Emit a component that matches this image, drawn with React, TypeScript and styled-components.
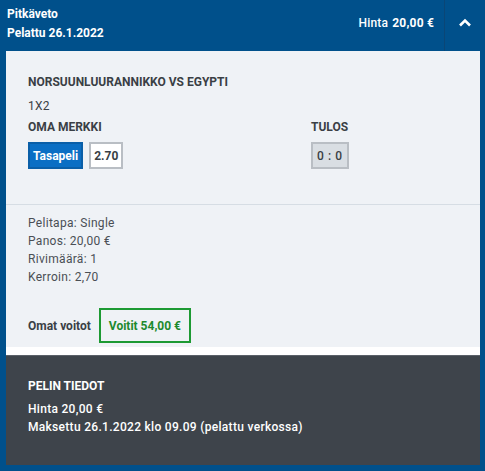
import React from "react";
import styled, { createGlobalStyle } from "styled-components";

const Global = createGlobalStyle`
  html, body { margin: 0; padding: 0; background: #ffffff; }
  body { font-family: Roboto, "Noto Sans", "DejaVu Sans", sans-serif; }
`;

const Frame = styled.div`
  width: 485px;
  height: 471px;
  box-sizing: border-box;
  background: #00508b;
  padding: 0 5px 6px 6px;
  display: flex;
  flex-direction: column;
`;

const Header = styled.div`
  height: 51px;
  display: flex;
  align-items: stretch;
  color: #ffffff;
  margin-right: -5px;
`;

const Titles = styled.div`
  flex: 1;
  padding: 5px 0 0 1px;
  display: flex;
  flex-direction: column;
  font-size: 12px;
  font-weight: 700;
  line-height: 19px;
`;

const Price = styled.div`
  display: flex;
  align-items: center;
  padding-right: 10px;
  font-size: 12px;
  font-weight: 500;
  padding-bottom: 5px;
  letter-spacing: 0.2px;
  b { font-weight: 700; margin-left: 4px; }
`;

const Toggle = styled.div`
  width: 40px;
  border-left: 1px solid #0a4676;
  display: flex;
  align-items: center;
  justify-content: center;
  padding-bottom: 6px;
`;

const Body = styled.div`
  flex: 1;
  background: #ffffff;
  display: flex;
  flex-direction: column;
`;

const Panel = styled.div`
  background: #eff2f6;
  margin-bottom: 8px;
  color: #3a3f45;
  font-size: 12px;
  line-height: 18px;
`;

const Section = styled.div<{ $top: number; $bottom: number; $divider?: boolean }>`
  padding: ${(p) => p.$top}px 22px ${(p) => p.$bottom}px 22px;
  border-bottom: ${(p) => (p.$divider ? "1px solid #d6dde4" : "none")};
`;

const Match = styled.div`
  font-weight: 700;
`;

const Market = styled.div`
  margin-top: 6px;
  letter-spacing: 0.3px;
`;

const Columns = styled.div`
  display: flex;
  margin-top: 3px;
`;

const Column = styled.div<{ $width?: number }>`
  width: ${(p) => (p.$width ? `${p.$width}px` : "auto")};
  display: flex;
  flex-direction: column;
`;

const Label = styled.div`
  font-weight: 700;
`;

const Chips = styled.div`
  display: flex;
  gap: 6px;
  margin-top: 6px;
`;

const Chip = styled.div<{ $variant: "selected" | "plain" | "result" }>`
  height: 27px;
  box-sizing: border-box;
  padding: 0 ${(p) => (p.$variant === "selected" ? 3 : p.$variant === "result" ? 4 : 3)}px;
  display: flex;
  align-items: center;
  font-weight: ${(p) => (p.$variant === "result" ? 500 : 700)};
  font-size: 12px;
  letter-spacing: ${(p) => (p.$variant === "result" ? "0.6px" : "0")};
  border: ${(p) =>
    p.$variant === "selected" ? "2px solid #0a5fa8" : "2px solid #b9bec4"};
  background: ${(p) =>
    p.$variant === "selected" ? "#0b6fc4" : p.$variant === "result" ? "#d9dee3" : "#ffffff"};
  color: ${(p) => (p.$variant === "selected" ? "#ffffff" : "#3a3f45")};
`;

const InfoLine = styled.div`
  color: #4a4f55;
  letter-spacing: 0.3px;
`;

const WinRow = styled.div`
  display: flex;
  align-items: center;
  gap: 8px;
  margin-top: 22px;
`;

const WinBox = styled.div`
  height: 35px;
  box-sizing: border-box;
  border: 2px solid #1d9a33;
  color: #1d8a2e;
  font-weight: 700;
  padding: 0 8px;
  display: flex;
  align-items: center;
`;

const Dark = styled.div`
  flex: 1;
  background: #3e444b;
  border-top: 1px solid #5a6068;
  color: #ffffff;
  padding: 21px 22px 0 22px;
  font-size: 12px;
  line-height: 18px;
  font-weight: 500;
`;

const DarkTitle = styled.div`
  font-weight: 700;
  margin-bottom: 5px;
`;

const DarkLine = styled.div`
  letter-spacing: 0.3px;
`;

const Chevron = () => (
  <svg width="14" height="9" viewBox="0 0 14 9">
    <path d="M2 7.5 L7 2.5 L12 7.5" fill="none" stroke="#ffffff" strokeWidth="2.6" />
  </svg>
);

export default function App() {
  return (
    <>
      <Global />
      <Frame>
        <Header>
          <Titles>
            <span>Pitkäveto</span>
            <span>Pelattu 26.1.2022</span>
          </Titles>
          <Price>
            Hinta<b>20,00 €</b>
          </Price>
          <Toggle>
            <Chevron />
          </Toggle>
        </Header>
        <Body>
          <Panel>
            <Section $top={22} $bottom={35} $divider>
              <Match>NORSUUNLUURANNIKKO VS EGYPTI</Match>
              <Market>1X2</Market>
              <Columns>
                <Column $width={283}>
                  <Label>OMA MERKKI</Label>
                  <Chips>
                    <Chip $variant="selected">Tasapeli</Chip>
                    <Chip $variant="plain">2.70</Chip>
                  </Chips>
                </Column>
                <Column>
                  <Label>TULOS</Label>
                  <Chips>
                    <Chip $variant="result">0 : 0</Chip>
                  </Chips>
                </Column>
              </Columns>
            </Section>
            <Section $top={9} $bottom={4}>
              <InfoLine>Pelitapa: Single</InfoLine>
              <InfoLine>Panos: 20,00 €</InfoLine>
              <InfoLine>Rivimäärä: 1</InfoLine>
              <InfoLine>Kerroin: 2,70</InfoLine>
              <WinRow>
                <Label>Omat voitot</Label>
                <WinBox>Voitit 54,00 €</WinBox>
              </WinRow>
            </Section>
          </Panel>
          <Dark>
            <DarkTitle>PELIN TIEDOT</DarkTitle>
            <DarkLine>Hinta 20,00 €</DarkLine>
            <DarkLine>Maksettu 26.1.2022 klo 09.09 (pelattu verkossa)</DarkLine>
          </Dark>
        </Body>
      </Frame>
    </>
  );
}
